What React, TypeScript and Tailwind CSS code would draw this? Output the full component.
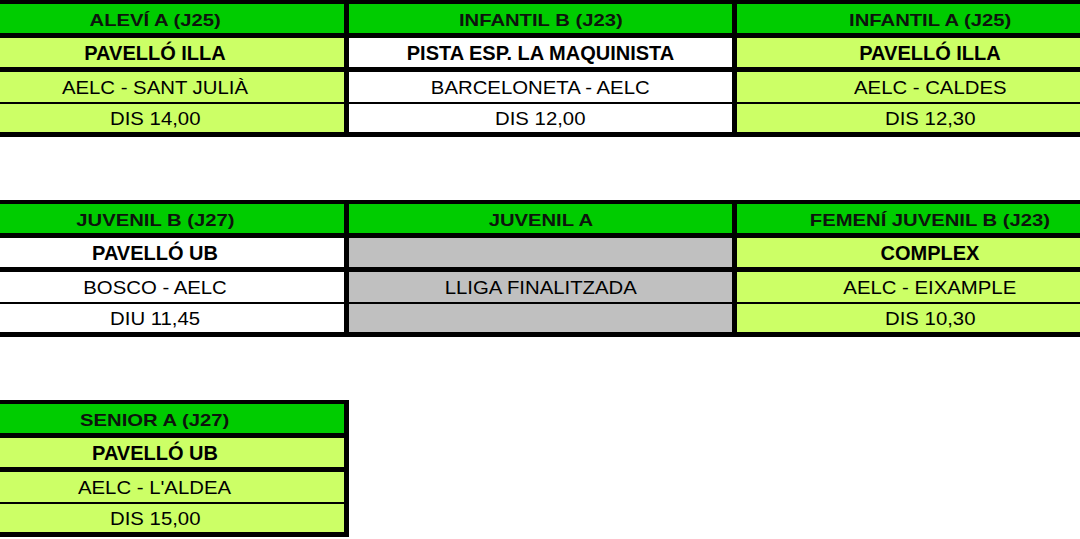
import React from 'react';

type Col = {
  title: string;
  venue: string;
  match: string;
  time: string;
  bg: string;
};

const row1: Col[] = [
  { title: 'ALEVÍ A (J25)', venue: 'PAVELLÓ ILLA', match: 'AELC - SANT JULIÀ', time: 'DIS 14,00', bg: 'bg-[#ccff66]' },
  { title: 'INFANTIL B (J23)', venue: 'PISTA ESP. LA MAQUINISTA', match: 'BARCELONETA - AELC', time: 'DIS 12,00', bg: 'bg-white' },
  { title: 'INFANTIL A (J25)', venue: 'PAVELLÓ ILLA', match: 'AELC - CALDES', time: 'DIS 12,30', bg: 'bg-[#ccff66]' },
];

const row2: Col[] = [
  { title: 'JUVENIL B (J27)', venue: 'PAVELLÓ UB', match: 'BOSCO - AELC', time: 'DIU 11,45', bg: 'bg-white' },
  { title: 'JUVENIL A', venue: '', match: 'LLIGA FINALITZADA', time: '', bg: 'bg-[#c0c0c0]' },
  { title: 'FEMENÍ JUVENIL B (J23)', venue: 'COMPLEX', match: 'AELC - EIXAMPLE', time: 'DIS 10,30', bg: 'bg-[#ccff66]' },
];

const row3: Col[] = [
  { title: 'SENIOR A (J27)', venue: 'PAVELLÓ UB', match: "AELC - L'ALDEA", time: 'DIS 15,00', bg: 'bg-[#ccff66]' },
];

const widths = ['w-[378px]', 'w-[383px]', 'w-[386px]'];

const GameColumn = ({ col, width }: { col: Col; width: string }) => (
  <div className={`flex flex-col shrink-0 ${width}`}>
    {/* header */}
    <div className="h-[29px] bg-[#00cc00] flex items-center justify-center pt-[4px]">
      <span className="inline-block text-[17px] font-bold text-[#0d140d] scale-x-[1.19] leading-none whitespace-nowrap">
        {col.title}
      </span>
    </div>
    {/* venue */}
    <div className={`h-[29px] mt-[5px] ${col.bg} flex items-center justify-center`}>
      <span className="text-[20px] font-bold leading-none whitespace-nowrap">{col.venue}</span>
    </div>
    {/* match */}
    <div className={`h-[30px] mt-[5px] ${col.bg} flex items-center justify-center`}>
      <span className="inline-block text-[19px] leading-none scale-x-[1.07] whitespace-nowrap">{col.match}</span>
    </div>
    {/* time */}
    <div className={`h-[28px] mt-[2px] ${col.bg} flex items-center justify-center`}>
      <span className="inline-block text-[19px] leading-none scale-x-[1.07] whitespace-nowrap">{col.time}</span>
    </div>
  </div>
);

const Section = ({ cols }: { cols: Col[] }) => (
  <div className="flex w-max ml-[-34px] bg-black pt-[4px] pb-[5px] gap-x-[5px] pr-[5px]">
    {cols.map((c, i) => (
      <GameColumn key={i} col={c} width={widths[i]} />
    ))}
  </div>
);

export default function App() {
  return (
    <div className="w-[1080px] h-[539px] overflow-hidden bg-white text-black font-['Liberation_Sans',Arial,sans-serif] flex flex-col gap-[63px]">
      <Section cols={row1} />
      <Section cols={row2} />
      <Section cols={row3} />
    </div>
  );
}
